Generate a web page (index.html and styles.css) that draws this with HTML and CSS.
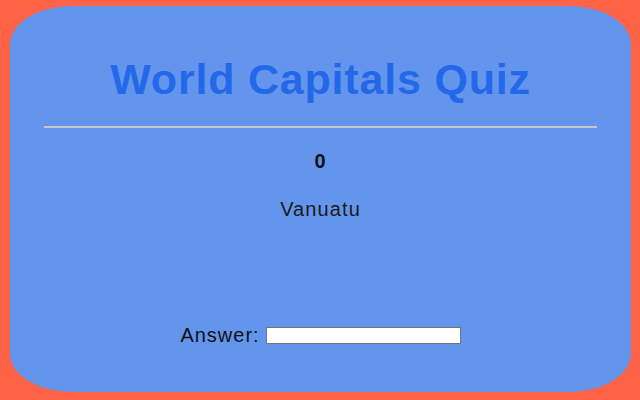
FILE: index.html
```html
<!DOCTYPE html>
<html lang="en">
<head>
<meta charset="UTF-8">
<meta name="viewport" content="width=device-width, initial-scale=1.0">
<title>World Capitals Quiz</title>
<link rel="stylesheet" href="styles.css">
</head>
<body>
<div class="quiz">
  <h1>World Capitals Quiz</h1>
  <hr>
  <div class="score">0</div>
  <div class="country">Vanuatu</div>
  <div class="answer-row">
    <label for="answer">Answer:</label>
    <input type="text" id="answer" name="answer">
  </div>
</div>
</body>
</html>
```

FILE: styles.css
```css
html, body {
  height: 100%;
}

body {
  margin: 0;
  padding: 6px 9px 8px 10px;
  box-sizing: border-box;
  background-color: #ff6347;
  font-family: "Liberation Sans", Arial, sans-serif;
  display: flex;
}

.quiz {
  flex: 1;
  background-color: #6495ed;
  border-radius: 10%;
  padding: 0 34px;
  display: flex;
  flex-direction: column;
  align-items: center;
}

.quiz h1 {
  margin: 50px 0 0;
  font-size: 43px;
  line-height: 46px;
  letter-spacing: 0.8px;
  color: #2468ea;
  text-align: center;
}

.quiz hr {
  align-self: stretch;
  margin: 24px 0 0;
  border: none;
  border-top: 2px solid #c8c8c8;
}

.score {
  margin-top: 22px;
  font-size: 20px;
  font-weight: bold;
  letter-spacing: 1px;
  color: #111;
}

.country {
  margin-top: 25px;
  font-size: 20px;
  letter-spacing: 1.1px;
  color: #1a1a1a;
}

.answer-row {
  margin-top: 103px;
  display: flex;
  align-items: center;
  gap: 6px;
  font-size: 20px;
  letter-spacing: 1px;
  color: #111;
}

.answer-row input {
  width: 191px;
  height: 13px;
  padding: 1px;
  border: 1px solid #767676;
  font-size: 13px;
}
```
